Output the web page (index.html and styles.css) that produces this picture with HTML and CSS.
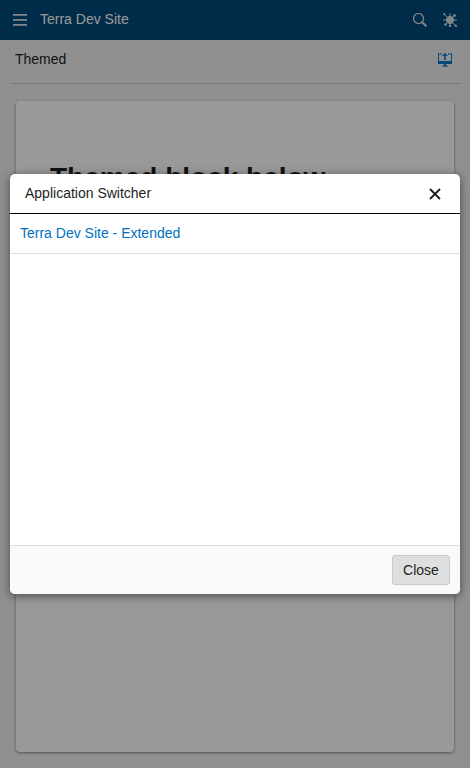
FILE: index.html
```html
<!DOCTYPE html>
<html lang="en">
<head>
<meta charset="utf-8">
<title>Terra Dev Site</title>
<link rel="stylesheet" href="styles.css">
</head>
<body>
<div class="app">
  <header class="header">
    <svg class="menu" width="14" height="12" viewBox="0 0 14 12" fill="currentColor"><path d="M0 0h14v1.700H0zM0 5h14v1.700H0zM0 10h14v1.700H0z"/></svg>
    <span class="brand">Terra Dev Site</span>
    <svg class="tool" width="14" height="14" viewBox="0 0 14 14" fill="none" stroke="currentColor"><circle cx="5.500" cy="5.500" r="5" stroke-width="1.200"/><path d="M9.200 9.200l4.200 4.200" stroke-width="2"/></svg>
    <svg class="tool" width="14" height="14" viewBox="0 0 14 14" fill="currentColor"><circle cx="7" cy="7" r="3.900"/><path d="M7 0v14M0 7h14M1.200 1.200l11.600 11.600M2.500 11.500l9-9" stroke="currentColor" stroke-width="1"/><circle cx="1.200" cy="1.200" r="1.100"/><circle cx="12.800" cy="12.800" r="1.200"/><circle cx="11.500" cy="2.500" r="1.400"/><circle cx="2.500" cy="11.500" r="1.300"/><circle cx="7" cy="13" r="1.200"/></svg>
  </header>
  <div class="subheader">
    <span>Themed</span>
    <svg width="14" height="14" viewBox="0 0 14 14" fill="currentColor"><path d="M0 .4h4v1.200H1V8h12V1.600h-3V.4h4V11H0zM7 0l3 3H7.800v4H6.200V3H4zM6 11h2v1.500h1.500v1.300h-5v-1.300H6z"/></svg>
  </div>
  <main class="card"><h1>Themed block below</h1></main>
</div>
<div class="overlay">
  <section class="modal" role="dialog">
    <div class="modal-header">
      <span>Application Switcher</span>
      <svg width="12" height="12" viewBox="0 0 12 12" fill="none" stroke="currentColor" stroke-width="1.900"><path d="M1 1l10 10M11 1L1 11"/></svg>
    </div>
    <div class="modal-body"><a class="item">Terra Dev Site - Extended</a></div>
    <div class="modal-footer"><button class="close">Close</button></div>
  </section>
</div>
</body>
</html>
```
FILE: styles.css
```css
* { box-sizing: border-box; }
body {
  margin: 0;
  height: 768px;
  overflow: hidden;
  background: #f0f0f0;
  color: #1c1f21;
  font: 14px/20px "Liberation Sans", Arial, sans-serif;
}
svg { display: block; flex: none; }
.app { height: 768px; display: flex; flex-direction: column; }
.header {
  height: 40px;
  flex: none;
  display: flex;
  align-items: center;
  padding: 0 13px;
  background: #00497b;
  color: #fff;
}
.header svg { color: #d9e0e6; }
.brand { flex: 1; margin: 0 0 2px 13px; }
.tool + .tool { margin-left: 16px; }
.subheader {
  height: 44px;
  flex: none;
  display: flex;
  justify-content: space-between;
  margin: 0 10px;
  padding: 9px 8px 0 5px;
  border-bottom: 1px solid #c8cacb;
}
.subheader svg { margin-top: 4px; color: #007cc3; }
.card {
  flex: 1;
  margin: 17px 16px 16px;
  padding: 60px 34px;
  background: #fff;
  border-radius: 4px;
  box-shadow: 0 1px 3px rgba(0, 0, 0, .45);
}
h1 { margin: 0; font-size: 28px; line-height: 34px; color: #1c1f21; }
.overlay {
  position: absolute;
  inset: 0;
  display: flex;
  align-items: center;
  justify-content: center;
  background: rgba(0, 0, 0, .4);
}
.modal {
  width: 450px;
  height: 420px;
  display: flex;
  flex-direction: column;
  overflow: hidden;
  background: #fff;
  border-radius: 5px;
  box-shadow: 0 2px 10px rgba(0, 0, 0, .5);
}
.modal-header {
  height: 40px;
  display: flex;
  justify-content: space-between;
  padding: 9px 19px 0 15px;
  border-bottom: 1px solid #000;
}
.modal-header svg { margin-top: 5px; }
.modal-body { flex: 1; }
.item {
  display: block;
  height: 40px;
  padding: 9px 10px 0;
  border-bottom: 1px solid #dedfe0;
  color: #0072c0;
}
.modal-footer {
  height: 49px;
  padding: 9px 10px;
  text-align: right;
  background: #f9f9f9;
  border-top: 1px solid #dedfe0;
}
.close {
  width: 58px;
  height: 30px;
  padding: 0;
  border: 1px solid #c8cacb;
  border-radius: 3px;
  background: #dedfe0;
  color: #1c1f21;
  font: inherit;
}
```
